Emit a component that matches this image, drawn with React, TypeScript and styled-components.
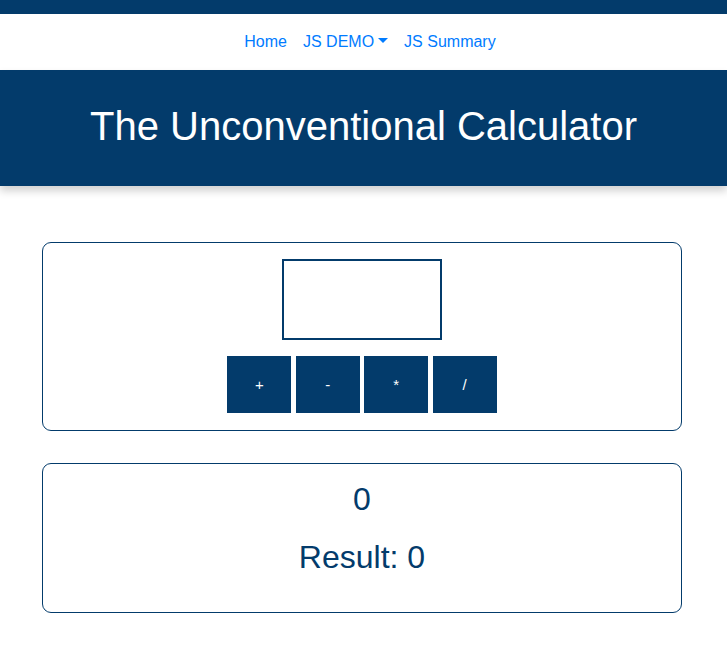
import React from "react";
import styled, { createGlobalStyle } from "styled-components";

const NAVY = "#033b6b";

const Global = createGlobalStyle`
  html, body { margin: 0; padding: 0; background: #fff; }
  body { font-family: "Liberation Sans", Arial, sans-serif; }
  * { box-sizing: border-box; }
`;

const TopBar = styled.div`
  height: 14px;
  background: ${NAVY};
`;

const Nav = styled.nav`
  height: 56px;
  display: flex;
  align-items: center;
  justify-content: center;
  padding: 8px 0 8px 13px;
  background: #fff;
`;

const NavLink = styled.a`
  display: inline-flex;
  align-items: center;
  padding: 8px;
  font-size: 16px;
  line-height: 24px;
  color: #007bff;
  text-decoration: none;
  cursor: pointer;
`;

const Caret = styled.span`
  display: inline-block;
  margin-left: 4px;
  width: 0;
  height: 0;
  border-top: 5px solid #007bff;
  border-left: 5px solid transparent;
  border-right: 5px solid transparent;
  transform: translateY(-2px);
`;

const Header = styled.header`
  background: ${NAVY};
  height: 116px;
  display: flex;
  align-items: center;
  justify-content: center;
  box-shadow: 0 5px 8px rgba(0, 0, 0, 0.18);
  position: relative;
`;

const Title = styled.h1`
  margin: 0;
  color: #fff;
  font-size: 40px;
  font-weight: 400;
  line-height: 48px;
  transform: translateY(-2px);
`;

const Main = styled.main`
  width: 640px;
  margin: 56px 0 0 42px;
  display: flex;
  flex-direction: column;
  gap: 32px;
`;

const Card = styled.section<{ $h: number }>`
  height: ${(p) => p.$h}px;
  border: 1px solid ${NAVY};
  border-radius: 9px;
  padding: 16px;
  display: flex;
  flex-direction: column;
  align-items: center;
`;

const InputBox = styled.input`
  width: 160px;
  height: 81px;
  border: 2px solid ${NAVY};
  outline: none;
  font-family: inherit;
  font-size: 16px;
  text-align: center;
  color: ${NAVY};
`;

const Ops = styled.div`
  display: flex;
  gap: 4.4px;
  margin-top: 16px;
`;

const OpButton = styled.button`
  width: 64px;
  height: 57px;
  border: none;
  background: ${NAVY};
  color: #fff;
  font-family: "Liberation Sans", Arial, sans-serif;
  font-size: 15px;
  cursor: pointer;
  padding: 0;
`;

const Value = styled.h2`
  margin: 0 0 20px;
  color: ${NAVY};
  font-size: 32px;
  font-weight: 400;
  line-height: 38px;
`;

export default function App() {
  return (
    <>
      <Global />
      <TopBar />
      <Nav>
        <NavLink>Home</NavLink>
        <NavLink>
          JS DEMO
          <Caret />
        </NavLink>
        <NavLink>JS Summary</NavLink>
      </Nav>
      <Header>
        <Title>The Unconventional Calculator</Title>
      </Header>
      <Main>
        <Card $h={189}>
          <InputBox type="number" />
          <Ops>
            <OpButton>+</OpButton>
            <OpButton>-</OpButton>
            <OpButton>*</OpButton>
            <OpButton>/</OpButton>
          </Ops>
        </Card>
        <Card $h={150}>
          <Value>0</Value>
          <Value>Result: 0</Value>
        </Card>
      </Main>
    </>
  );
}
